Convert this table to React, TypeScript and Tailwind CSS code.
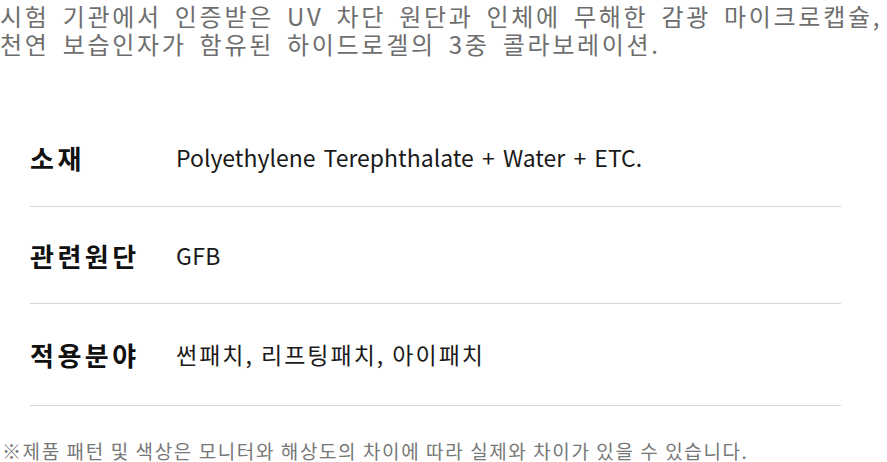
const SPECS = [
  { label: '소재', value: 'Polyethylene Terephthalate + Water + ETC.', height: 'h-[99px]', tracking: 'tracking-[0px] [word-spacing:3px]' },
  { label: '관련원단', value: 'GFB', height: 'h-[97px]', tracking: 'tracking-[0.4px]' },
  { label: '적용분야', value: '썬패치, 리프팅패치, 아이패치', height: 'h-[102px]', tracking: 'tracking-[2px]' },
];

const FONT = "font-['Noto_Sans_CJK_KR','Noto_Sans',sans-serif]";

export default function App() {
  return (
    <div className={`h-[462px] w-[887px] overflow-hidden bg-white ${FONT}`}>
      {/* Intro copy */}
      <p className="pt-[2px] text-[24px] leading-[28px] tracking-[2.7px] [word-spacing:5px] text-[#6e6e6e] whitespace-nowrap">
        시험 기관에서 인증받은 UV 차단 원단과 인체에 무해한 감광 마이크로캡슐,
        <br />
        천연 보습인자가 함유된 하이드로겔의 3중 콜라보레이션.
      </p>

      {/* Spec table */}
      <div className="mt-[50px] pl-[30px] pr-[46px]">
        {SPECS.map((row) => (
          <div
            key={row.label}
            className={`flex items-center border-b border-[#d6d6d6] ${row.height}`}
          >
            <div className="w-[146px] shrink-0 text-[26px] font-bold tracking-[3.5px] text-[#111]">{row.label}</div>
            <div className={`text-[23px] text-[#1a1a1a] ${row.tracking}`}>{row.value}</div>
          </div>
        ))}
      </div>

      {/* Footnote */}
      <p className="mt-[34px] pl-[2px] text-[19px] leading-[22px] tracking-[1.6px] text-[#777] whitespace-nowrap">
        ※제품 패턴 및 색상은 모니터와 해상도의 차이에 따라 실제와 차이가 있을 수 있습니다.
      </p>
    </div>
  );
}
